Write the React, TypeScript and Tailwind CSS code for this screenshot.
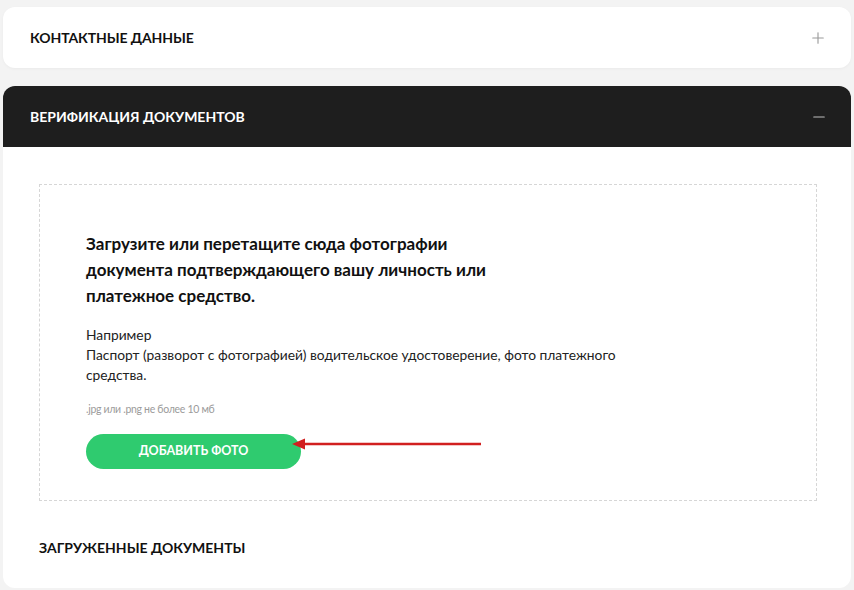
import { Minus, Plus } from "lucide-react";

const font = { fontFamily: "Lato, 'Open Sans', sans-serif" };

export default function App() {
  return (
    <div
      className="min-h-[590px] w-[854px] bg-[#f3f3f3] px-[3px] pt-[7px] text-[#111]"
      style={font}
    >
      <div className="flex h-[61px] items-center justify-between rounded-[12px] bg-white pl-[27px] pr-[24px] shadow-[0_1px_3px_rgba(0,0,0,0.04)]">
        <span className="text-[14px] font-bold uppercase tracking-[-0.1px]">
          Контактные данные
        </span>
        <Plus size={18} strokeWidth={1.5} className="text-[#9a9a9a]" />
      </div>

      <div className="mt-[18px] overflow-hidden rounded-[12px] bg-white">
        <div className="flex h-[61px] items-center justify-between bg-[#1e1e1e] pl-[27px] pr-[23px]">
          <span className="text-[14px] font-bold uppercase tracking-[0px] text-white">
            Верификация документов
          </span>
          <Minus size={18} strokeWidth={1.5} className="text-[#bdbdbd]" />
        </div>

        <div className="pl-[36px] pr-[34px] pt-[37px] pb-[30px]">
          <div className="relative border border-dashed border-[#d6d6d6] pl-[46px] pt-[46px] pb-[31px]">
            <p className="text-[17px] font-bold leading-[26px]">
              Загрузите или перетащите сюда фотографии
              <br />
              документа подтверждающего вашу личность или
              <br />
              платежное средство.
            </p>
            <p className="mt-[16px] text-[13.8px] leading-[20px] text-[#222]">
              Например
              <br />
              Паспорт (разворот с фотографией) водительское удостоверение, фото платежного
              <br />
              средства.
            </p>
            <p className="mt-[17px] text-[10.5px] leading-[14px] tracking-[-0.3px] text-[#9b9b9b]">
              .jpg или .png не более 10 мб
            </p>
            <button className="mt-[18px] flex h-[35px] w-[215px] items-center justify-center rounded-full bg-[#2fcb6f] text-[12.5px] font-bold uppercase tracking-[0px] text-white">
              Добавить фото
            </button>

            <svg
              className="absolute left-[252px] top-[252px]"
              width="190"
              height="14"
              viewBox="0 0 190 14"
            >
              <line x1="10" y1="7" x2="189" y2="7" stroke="#d11f1f" strokeWidth="2.5" />
              <polygon points="0,7 13,1.5 13,12.5" fill="#d11f1f" />
            </svg>
          </div>

          <div className="pt-[37px] text-[14px] font-bold uppercase leading-[20px] tracking-[0px]">
            Загруженные документы
          </div>
        </div>
      </div>
    </div>
  );
}
